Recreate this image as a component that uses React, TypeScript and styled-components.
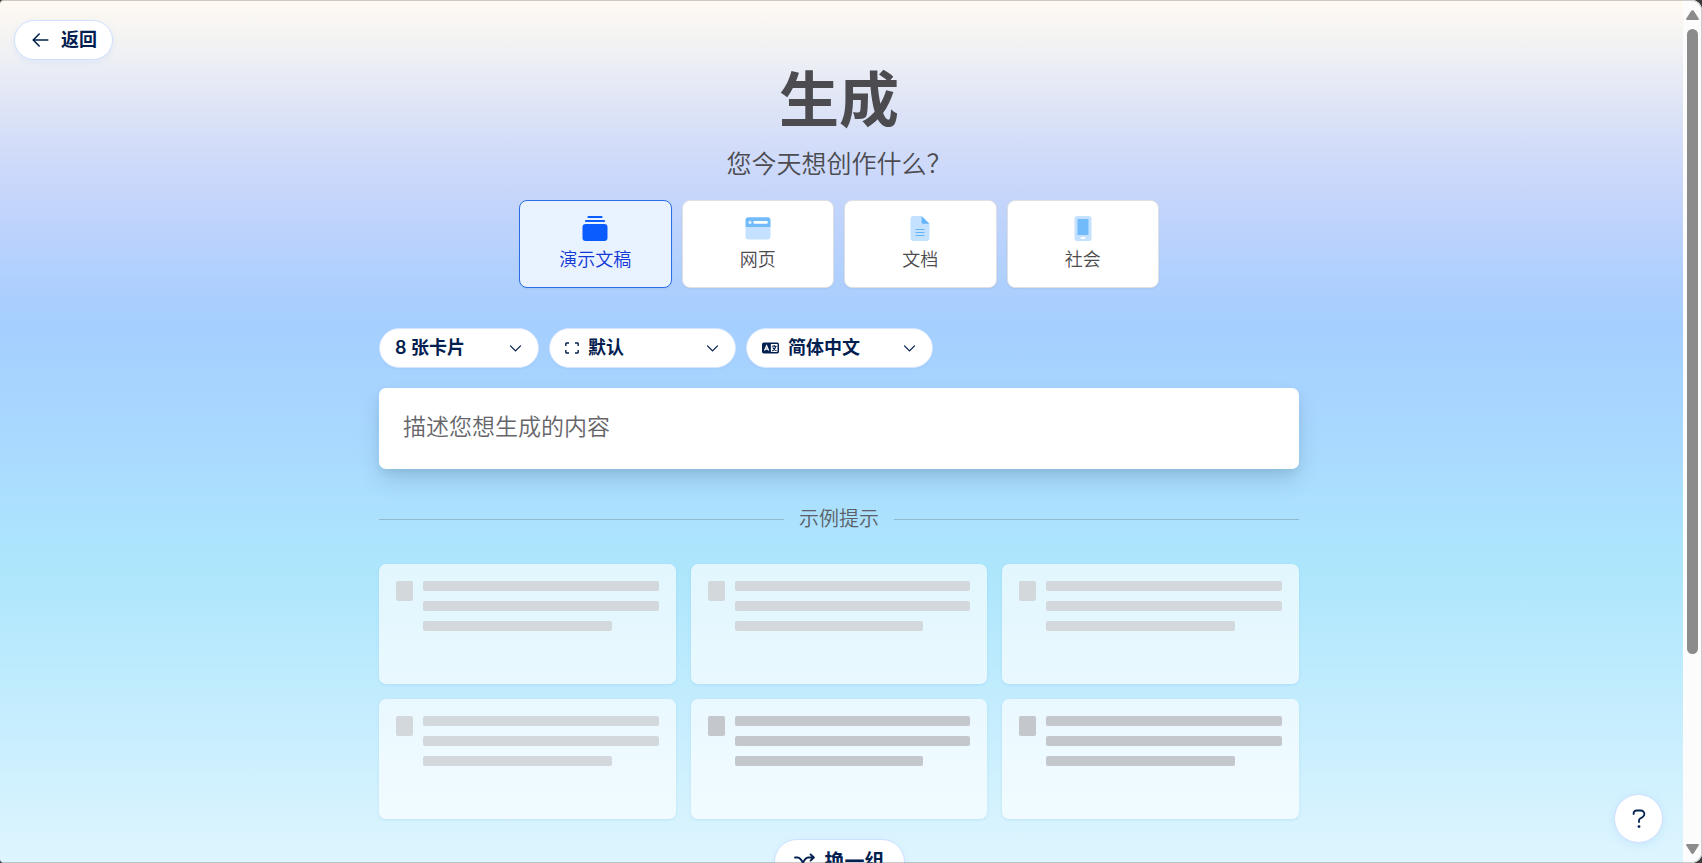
import React from "react";
import styled, { createGlobalStyle } from "styled-components";

const GlobalStyle = createGlobalStyle`
  *, *::before, *::after { box-sizing: border-box; }
  body {
    margin: 0;
    background: #3a3a3a;
    font-family: Inter, "Noto Sans CJK SC", sans-serif;
    color: #4b4b50;
  }
  button, select, textarea { font-family: inherit; margin: 0; }
`;

const Window = styled.div`
  position: relative;
  display: flex;
  height: 100vh;
  overflow: hidden;
  border-radius: 4px 10px 10px 4px;
  background: linear-gradient(
    180deg,
    #fffaf1 0%,
    #f0f1f4 6%,
    #dfe5f6 12%,
    #d0dbfa 18%,
    #c5d5fb 23%,
    #abcffe 34%,
    #a5cfff 38%,
    #a8d6ff 48%,
    #abdffe 57%,
    #ade6fc 66%,
    #c1ecfe 80%,
    #def5fe 100%
  );

  &::after {
    content: "";
    position: absolute;
    inset: 0;
    border: 1px solid rgba(110, 110, 110, 0.35);
    border-left: 0;
    border-radius: inherit;
    pointer-events: none;
  }
`;

const Pane = styled.div`
  position: relative;
  flex: 1;
  min-width: 0;
  overflow: hidden;
  padding: 20px 19px 20px 14px;
`;

const Header = styled.header`
  display: flex;
  height: 40px;
`;

const PillButton = styled.button<{ $large?: boolean }>`
  display: inline-flex;
  align-items: center;
  justify-content: center;
  gap: ${(p) => (p.$large ? 10 : 12)}px;
  height: ${(p) => (p.$large ? 46 : 40)}px;
  padding: 0 ${(p) => (p.$large ? 19 : 15)}px 0 ${(p) => (p.$large ? 19 : 17)}px;
  border: 1px solid #cfe1ff;
  border-radius: 23px;
  background: #fff;
  color: #02204f;
  font-size: ${(p) => (p.$large ? 20 : 18)}px;
  line-height: 26px;
  font-weight: 700;
  white-space: nowrap;
  box-shadow: 0 2px 6px rgba(120, 165, 235, 0.12);
  cursor: pointer;
`;

const Main = styled.main`
  width: 100%;
  max-width: 920px;
  margin: 0 auto;
  display: flex;
  flex-direction: column;
  align-items: center;
`;

const Title = styled.h1`
  margin: 0;
  font-size: 60px;
  line-height: 80px;
  font-weight: 700;
`;

const Subtitle = styled.p`
  margin: 6px 0 0;
  font-size: 25px;
  line-height: 36px;
  font-weight: 350;
`;

const Kinds = styled.div`
  display: grid;
  grid-template-columns: repeat(4, 1fr);
  gap: 10px;
  width: 100%;
  max-width: 640px;
  margin-top: 18px;
`;

const Kind = styled.button<{ $active?: boolean }>`
  display: flex;
  flex-direction: column;
  align-items: center;
  gap: 4px;
  height: 88px;
  padding: 15px 8px 0;
  border: 1px solid ${(p) => (p.$active ? "#2b6be6" : "#dfe0e4")};
  border-radius: 8px;
  background: ${(p) => (p.$active ? "#e9f2ff" : "#fff")};
  color: ${(p) => (p.$active ? "#1238d6" : "#4b4b50")};
  font-size: 18px;
  line-height: 28px;
  font-weight: 350;
  box-shadow: 0 1px 2px rgba(0, 0, 0, 0.05);
  cursor: pointer;
`;

const Options = styled.div`
  display: flex;
  flex-wrap: wrap;
  gap: 10px;
  width: 100%;
  margin-top: 40px;
`;

const Field = styled.label<{ $wide?: boolean }>`
  display: flex;
  align-items: center;
  gap: 9px;
  width: ${(p) => (p.$wide ? 187 : 160)}px;
  height: 40px;
  padding: 0 16px 0 15px;
  border: 1px solid #d6e6ff;
  border-radius: 20px;
  background: #fff;
  color: #02204f;
  box-shadow: 0 1px 2px rgba(80, 120, 200, 0.08);
`;

const Select = styled.select`
  flex: 1;
  min-width: 0;
  padding: 0;
  border: 0;
  outline: 0;
  appearance: none;
  background: transparent;
  color: inherit;
  font-size: 18px;
  line-height: 26px;
  font-weight: 600;
`;

const Prompt = styled.textarea`
  display: block;
  width: 100%;
  height: 81px;
  margin-top: 20px;
  padding: 22px 24px;
  border: 0;
  border-radius: 7px;
  outline: 0;
  resize: none;
  overflow: hidden;
  background: #fff;
  color: #4b4b50;
  font-size: 23px;
  line-height: 34px;
  font-weight: 350;
  box-shadow: 0 12px 22px -2px rgba(50, 80, 110, 0.2), 0 4px 8px -2px rgba(50, 80, 110, 0.12);

  &::placeholder { color: #66666a; opacity: 1; }
`;

const Divider = styled.div`
  display: flex;
  align-items: center;
  gap: 15px;
  width: 100%;
  margin-top: 34px;
  color: #5b6068;
  font-size: 20px;
  line-height: 32px;
  font-weight: 350;

  &::before, &::after {
    content: "";
    flex: 1;
    height: 1px;
    background: #93b9cf;
  }
`;

const Examples = styled.div`
  display: grid;
  grid-template-columns: repeat(3, 1fr);
  gap: 15px;
  width: 100%;
  margin: 29px 0 20px;
`;

const Card = styled.div`
  display: flex;
  align-items: flex-start;
  gap: 10px;
  height: 120px;
  padding: 17px;
  border-radius: 7px;
  background: rgba(255, 255, 255, 0.65);
  box-shadow: 0 1px 3px rgba(60, 140, 190, 0.14);
`;

const Tile = styled.div<{ $dark?: boolean }>`
  flex: none;
  width: 17px;
  height: 20px;
  border-radius: 2px;
  background: ${(p) => (p.$dark ? "#c4c7cb" : "#d3d8dc")};
`;

const Lines = styled.div`
  flex: 1;
  display: flex;
  flex-direction: column;
  gap: 10px;
`;

const Line = styled.div<{ $short?: boolean; $dark?: boolean }>`
  width: ${(p) => (p.$short ? "80%" : "100%")};
  height: 10px;
  border-radius: 2px;
  background: ${(p) => (p.$dark ? "#c4c7cb" : "#d3d8dc")};
`;

const Help = styled.button`
  position: absolute;
  right: 20px;
  bottom: 20px;
  display: flex;
  align-items: center;
  justify-content: center;
  width: 49px;
  height: 49px;
  padding: 0;
  border: 1px solid #cfe0ff;
  border-radius: 50%;
  background: #fff;
  color: #02204f;
  box-shadow: 0 2px 8px rgba(120, 165, 235, 0.16);
  cursor: pointer;
`;

const ScrollTrack = styled.div`
  flex: none;
  display: flex;
  flex-direction: column;
  align-items: center;
  width: 19px;
  padding: 10px 0 9px;
  background: #fcfcfc;
`;

const ThumbArea = styled.div`
  flex: 1;
  width: 11px;
  margin: 9px 0;
`;

const Thumb = styled.div`
  height: 77.5%;
  border-radius: 6px;
  background: #8b8b8b;
`;

const Chevron = () => (
  <svg width="13" height="8" viewBox="0 0 13 8" fill="none" stroke="currentColor" strokeWidth="1.3" strokeLinecap="round" strokeLinejoin="round" aria-hidden="true">
    <path d="M1.500 1.900 6.500 6.900 11.500 1.900" />
  </svg>
);

const BackArrow = () => (
  <svg width="17" height="14" viewBox="0 0 17 14" fill="none" stroke="currentColor" strokeWidth="1.6" strokeLinecap="round" strokeLinejoin="round" aria-hidden="true">
    <path d="M15.8 7H1.4M7.2 1 1.2 7l6 6" />
  </svg>
);

const SlidesIcon = () => (
  <svg width="26" height="26" viewBox="0 0 26 26" fill="#0a5cff" aria-hidden="true">
    <rect x="5.5" y="0" width="15" height="2" rx="0.8" />
    <rect x="3" y="4" width="20" height="2" rx="0.8" />
    <rect x="0.5" y="8" width="25" height="17" rx="3.2" />
  </svg>
);

const WebIcon = () => (
  <svg width="26" height="26" viewBox="0 0 26 26" aria-hidden="true">
    <path d="M.5 11h25v9.500a3 3 0 0 1-3 3h-19a3 3 0 0 1-3-3z" fill="#c4e2ff" />
    <path d="M.5 11V4.200a3 3 0 0 1 3-3h19a3 3 0 0 1 3 3V11z" fill="#72bbfb" />
    <circle cx="5" cy="6.400" r="1.600" fill="#dceeff" />
    <rect x="8.400" y="5.100" width="14.400" height="2.600" rx="1.200" fill="#fff" />
  </svg>
);

const DocIcon = () => (
  <svg width="26" height="26" viewBox="0 0 26 26" aria-hidden="true">
    <path d="M6.500 0h8.400l7.600 7.600V22a3 3 0 0 1-3 3h-13a3 3 0 0 1-3-3V3a3 3 0 0 1 3-3z" fill="#c4e2ff" />
    <path d="M14.600.3v5.900a1.500 1.500 0 0 0 1.500 1.500h6.200z" fill="#63b4fb" />
    <path d="M8.500 13.500h9M8.500 16.500h9M8.500 19.500h9" stroke="#63b4fb" strokeWidth="1.200" />
  </svg>
);

const PhoneIcon = () => (
  <svg width="26" height="26" viewBox="0 0 26 26" aria-hidden="true">
    <rect x="4.500" y="0" width="17" height="25" rx="2.800" fill="#c4e2ff" />
    <rect x="7.500" y="3" width="11" height="16" fill="#72bbfb" />
    <rect x="10.500" y="21.100" width="5" height="1.800" rx="0.900" fill="#fff" />
  </svg>
);

const FrameIcon = () => (
  <svg width="14" height="12" viewBox="0 0 14 12" fill="none" stroke="currentColor" strokeWidth="1.400" strokeLinejoin="round" aria-hidden="true">
    <path d="M.8 4V1.700a.7.700 0 0 1 .7-.7H4M10 1h2.500a.7.700 0 0 1 .7.700V4M.8 8v2.300c0 .4.300.7.700.7H4M10 11h2.500a.7.700 0 0 0 .7-.7V8" />
  </svg>
);

const LanguageIcon = () => (
  <svg width="17" height="12" viewBox="0 0 17 12" aria-hidden="true">
    <rect x="0" y="0.500" width="17" height="11" rx="1.800" fill="currentColor" />
    <rect x="8.900" y="2" width="6.600" height="8" rx="0.400" fill="#fff" />
    <path d="M2.500 8.600 4.600 3.700l2.100 4.900M3.300 7.200h2.600" fill="none" stroke="#fff" strokeWidth="1.200" />
    <path d="M9.900 4.300h4.700M12.200 3v1.300M13.800 4.500c-.5 2-1.700 3.500-3.600 4.400M10.800 5.500c.7 1.500 1.900 2.700 3.700 3.300" fill="none" stroke="currentColor" strokeWidth="1.100" />
  </svg>
);

const ShuffleIcon = () => (
  <svg width="21" height="18" viewBox="0 0 21 18" fill="none" stroke="currentColor" strokeWidth="1.900" strokeLinecap="round" strokeLinejoin="round" aria-hidden="true">
    <path d="M1 4.500h2.400c1.300 0 2.300.6 3.100 1.600l4.800 6.200c.8 1 1.800 1.600 3.100 1.600h5M1 13.900h2.400c1.300 0 2.300-.6 3.100-1.600l4.800-6.200c.8-1 1.800-1.600 3.100-1.600h5M16.600 1.400l3.200 3.100-3.200 3.100M16.600 10.800l3.200 3.100-3.200 3.100" />
  </svg>
);

const HelpIcon = () => (
  <svg width="14" height="20" viewBox="0 0 14 20" fill="none" stroke="currentColor" strokeWidth="1.800" strokeLinecap="round" strokeLinejoin="round" aria-hidden="true">
    <path d="M1.600 5V4.300C1.600 2.600 3 1.500 4.700 1.500h3.900c2.100 0 3.800 1.500 3.800 3.500 0 1.400-.8 2.500-2 3.200L8.200 9.500C7.400 10 7 10.600 7 11.500v1.600" />
    <circle cx="7" cy="17.600" r="1.400" fill="currentColor" stroke="none" />
  </svg>
);

const ScrollArrow = ({ down }: { down?: boolean }) => (
  <svg width="13" height="10" viewBox="0 0 13 10" fill="#8b8b8b" aria-hidden="true">
    <path d={down ? "M1.200 0h10.600c.9 0 1.400.9.900 1.600L7.700 9.200c-.6.900-1.800.9-2.400 0L.3 1.600C-.2.900.3 0 1.200 0z" : "M1.200 10h10.600c.9 0 1.400-.9.900-1.600L7.700.8C7.100-.1 5.900-.1 5.300.8L.3 8.400c-.5.700 0 1.600.9 1.600z"} />
  </svg>
);

const kinds = [
  { name: "演示文稿", Icon: SlidesIcon },
  { name: "网页", Icon: WebIcon },
  { name: "文档", Icon: DocIcon },
  { name: "社会", Icon: PhoneIcon },
];

const placeholders = [false, false, false, false, true, true];

export default function App() {
  const [kind, setKind] = React.useState("演示文稿");

  return (
    <>
      <GlobalStyle />
      <Window>
        <Pane>
          <Header>
            <PillButton type="button">
              <BackArrow />
              返回
            </PillButton>
          </Header>
          <Main>
            <Title>生成</Title>
            <Subtitle>您今天想创作什么？</Subtitle>
            <Kinds>
              {kinds.map(({ name, Icon }) => (
                <Kind key={name} type="button" $active={kind === name} aria-pressed={kind === name} onClick={() => setKind(name)}>
                  <Icon />
                  {name}
                </Kind>
              ))}
            </Kinds>
            <Options>
              <Field>
                <Select aria-label="卡片数量">
                  <option>8 张卡片</option>
                </Select>
                <Chevron />
              </Field>
              <Field $wide>
                <FrameIcon />
                <Select aria-label="页面尺寸">
                  <option>默认</option>
                </Select>
                <Chevron />
              </Field>
              <Field $wide>
                <LanguageIcon />
                <Select aria-label="语言">
                  <option>简体中文</option>
                </Select>
                <Chevron />
              </Field>
            </Options>
            <Prompt rows={1} aria-label="描述您想生成的内容" placeholder="描述您想生成的内容" />
            <Divider>示例提示</Divider>
            <Examples>
              {placeholders.map((dark, i) => (
                <Card key={i}>
                  <Tile $dark={dark} />
                  <Lines>
                    <Line $dark={dark} />
                    <Line $dark={dark} />
                    <Line $dark={dark} $short />
                  </Lines>
                </Card>
              ))}
            </Examples>
            <PillButton type="button" $large>
              <ShuffleIcon />
              换一组
            </PillButton>
          </Main>
          <Help type="button" aria-label="帮助">
            <HelpIcon />
          </Help>
        </Pane>
        <ScrollTrack aria-hidden="true">
          <ScrollArrow />
          <ThumbArea>
            <Thumb />
          </ThumbArea>
          <ScrollArrow down />
        </ScrollTrack>
      </Window>
    </>
  );
}
